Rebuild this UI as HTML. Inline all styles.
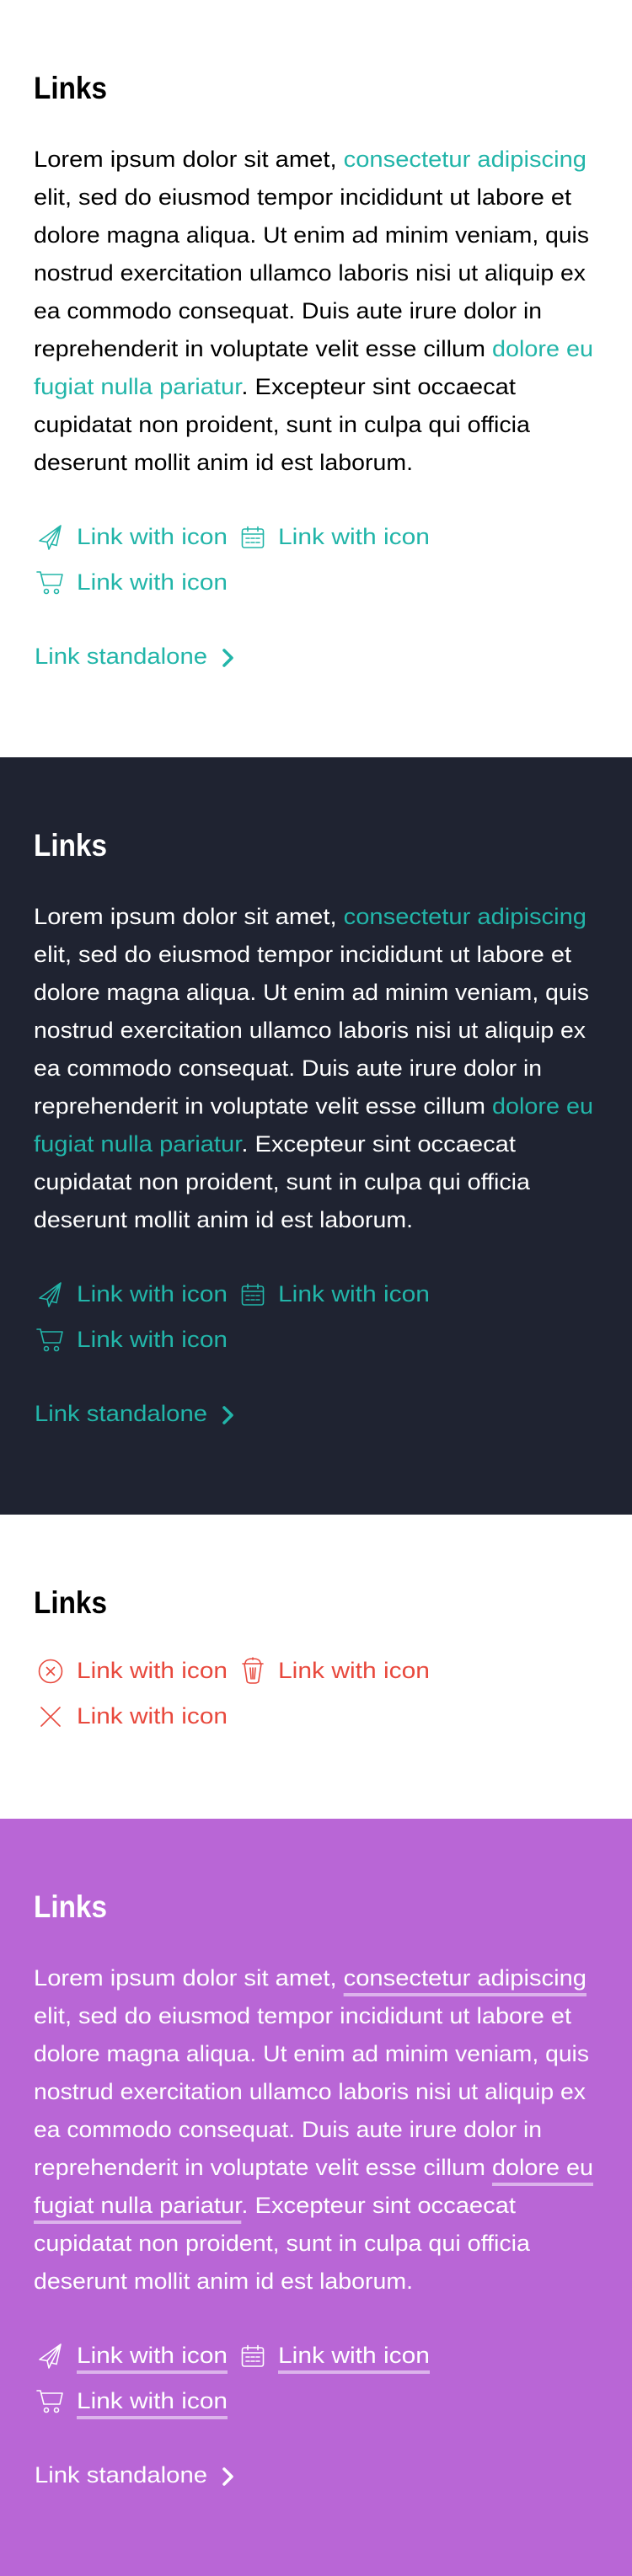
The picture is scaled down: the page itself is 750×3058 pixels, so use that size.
<!DOCTYPE html>
<html><head><meta charset="utf-8"><style>
*{margin:0;padding:0;box-sizing:border-box}
body{width:750px;height:3058px;position:relative;font-family:"Liberation Sans",sans-serif;overflow:hidden}
.sec{position:absolute;left:0;width:750px}
.ab{position:absolute;left:40px;white-space:nowrap;line-height:45px;height:45px}
.f{display:inline-block;transform-origin:0 50%;white-space:nowrap}
h2{position:absolute;left:40px;font-size:37px;font-weight:bold;line-height:50px;height:50px;transform:scaleX(.9);transform-origin:0 50%}
.t{font-size:27px}
.tl{color:#22b5a9}
.rd{color:#e8493d}
.u{text-decoration:underline;text-decoration-thickness:4px;text-underline-offset:9px;text-decoration-color:rgba(255,255,255,.5)}
svg{position:absolute;fill:none;stroke-width:1.6;stroke-linecap:round;stroke-linejoin:round}
.lk{position:absolute;font-size:27px;line-height:45px;height:45px;white-space:nowrap}
</style></head><body>

<!-- SECTION 1 -->
<div class="sec" style="top:0;height:899px;background:#fff;color:#000">
<h2 style="top:80px">Links</h2>
<div class="ab t" style="top:167px"><span class="f" style="--w:656">Lorem ipsum dolor sit amet, <span class="tl">consectetur adipiscing</span></span></div>
<div class="ab t" style="top:212px"><span class="f" style="--w:638">elit, sed do eiusmod tempor incididunt ut labore et</span></div>
<div class="ab t" style="top:257px"><span class="f" style="--w:659">dolore magna aliqua. Ut enim ad minim veniam, quis</span></div>
<div class="ab t" style="top:302px"><span class="f" style="--w:655">nostrud exercitation ullamco laboris nisi ut aliquip ex</span></div>
<div class="ab t" style="top:347px"><span class="f" style="--w:603">ea commodo consequat. Duis aute irure dolor in</span></div>
<div class="ab t" style="top:392px"><span class="f" style="--w:664">reprehenderit in voluptate velit esse cillum <span class="tl">dolore eu</span></span></div>
<div class="ab t" style="top:437px"><span class="f" style="--w:572"><span class="tl">fugiat nulla pariatur</span>. Excepteur sint occaecat</span></div>
<div class="ab t" style="top:482px"><span class="f" style="--w:589">cupidatat non proident, sunt in culpa qui officia</span></div>
<div class="ab t" style="top:527px"><span class="f" style="--w:450">deserunt mollit anim id est laborum.</span></div>
<svg style="left:45px;top:622px" width="30" height="32" viewBox="0 0 30 32" stroke="#22b5a9"><path d="M27 2L2 20l9 1.5zM27 2L11 21.5l2 8.5 3-6.5M27 2l-11 22 6 1.5z"/></svg>
<div class="lk tl" style="left:91px;top:615px"><span class="f" style="--w:179">Link with icon</span></div>
<svg style="left:286px;top:624px" width="28" height="28" viewBox="0 0 28 28" stroke="#22b5a9"><rect x="1.5" y="4" width="25" height="22" rx="2.5"/><path d="M1.5 10h25M8 1.5v5M20 1.5v5M6 15h4M12 15h4M18 15h4M6 20h4M12 20h4M18 20h4"/></svg>
<div class="lk tl" style="left:330px;top:615px"><span class="f" style="--w:180">Link with icon</span></div>
<svg style="left:43px;top:677px" width="34" height="30" viewBox="0 0 34 30" stroke="#22b5a9"><path d="M1 2h4l4 16h19l3-13H7"/><circle cx="12" cy="25" r="2.5"/><circle cx="24" cy="25" r="2.5"/></svg>
<div class="lk tl" style="left:91px;top:669px"><span class="f" style="--w:179">Link with icon</span></div>
<div class="lk tl" style="left:41px;top:757px"><span class="f" style="--w:205">Link standalone</span></div>
<svg style="left:263px;top:770px" width="16" height="22" viewBox="0 0 16 22" stroke="#22b5a9"><path d="M3 2l9 9-9 9" stroke-width="3.6"/></svg>
</div>

<!-- SECTION 2 DARK -->
<div class="sec" style="top:899px;height:899px;background:#1f2331;color:#fff">
<h2 style="top:80px">Links</h2>
<div class="ab t" style="top:167px"><span class="f" style="--w:656">Lorem ipsum dolor sit amet, <span class="tl">consectetur adipiscing</span></span></div>
<div class="ab t" style="top:212px"><span class="f" style="--w:638">elit, sed do eiusmod tempor incididunt ut labore et</span></div>
<div class="ab t" style="top:257px"><span class="f" style="--w:659">dolore magna aliqua. Ut enim ad minim veniam, quis</span></div>
<div class="ab t" style="top:302px"><span class="f" style="--w:655">nostrud exercitation ullamco laboris nisi ut aliquip ex</span></div>
<div class="ab t" style="top:347px"><span class="f" style="--w:603">ea commodo consequat. Duis aute irure dolor in</span></div>
<div class="ab t" style="top:392px"><span class="f" style="--w:664">reprehenderit in voluptate velit esse cillum <span class="tl">dolore eu</span></span></div>
<div class="ab t" style="top:437px"><span class="f" style="--w:572"><span class="tl">fugiat nulla pariatur</span>. Excepteur sint occaecat</span></div>
<div class="ab t" style="top:482px"><span class="f" style="--w:589">cupidatat non proident, sunt in culpa qui officia</span></div>
<div class="ab t" style="top:527px"><span class="f" style="--w:450">deserunt mollit anim id est laborum.</span></div>
<svg style="left:45px;top:622px" width="30" height="32" viewBox="0 0 30 32" stroke="#22b5a9"><path d="M27 2L2 20l9 1.5zM27 2L11 21.5l2 8.5 3-6.5M27 2l-11 22 6 1.5z"/></svg>
<div class="lk tl" style="left:91px;top:615px"><span class="f" style="--w:179">Link with icon</span></div>
<svg style="left:286px;top:624px" width="28" height="28" viewBox="0 0 28 28" stroke="#22b5a9"><rect x="1.5" y="4" width="25" height="22" rx="2.5"/><path d="M1.5 10h25M8 1.5v5M20 1.5v5M6 15h4M12 15h4M18 15h4M6 20h4M12 20h4M18 20h4"/></svg>
<div class="lk tl" style="left:330px;top:615px"><span class="f" style="--w:180">Link with icon</span></div>
<svg style="left:43px;top:677px" width="34" height="30" viewBox="0 0 34 30" stroke="#22b5a9"><path d="M1 2h4l4 16h19l3-13H7"/><circle cx="12" cy="25" r="2.5"/><circle cx="24" cy="25" r="2.5"/></svg>
<div class="lk tl" style="left:91px;top:669px"><span class="f" style="--w:179">Link with icon</span></div>
<div class="lk tl" style="left:41px;top:757px"><span class="f" style="--w:205">Link standalone</span></div>
<svg style="left:263px;top:770px" width="16" height="22" viewBox="0 0 16 22" stroke="#22b5a9"><path d="M3 2l9 9-9 9" stroke-width="3.6"/></svg>
</div>

<!-- SECTION 3 -->
<div class="sec" style="top:1798px;height:361px;background:#fff;color:#000">
<h2 style="top:80px">Links</h2>
<svg style="left:45px;top:171px" width="30" height="30" viewBox="0 0 30 30" stroke="#e8493d"><circle cx="15" cy="15" r="13.5"/><path d="M10.5 10.5l9 9M19.5 10.5l-9 9"/></svg>
<div class="lk rd" style="left:91px;top:163px"><span class="f" style="--w:179">Link with icon</span></div>
<svg style="left:286px;top:169px" width="28" height="32" viewBox="0 0 28 32" stroke="#e8493d"><path d="M2 8h24M5 8c0-5 4-6 9-6s9 1 9 6M14 1v2M4 8l3 20c0 2 2 3 4 3h6c2 0 4-1 4-3l3-20M11 13l1 13M14 13v13M17 13l-1 13"/></svg>
<div class="lk rd" style="left:330px;top:163px"><span class="f" style="--w:180">Link with icon</span></div>
<svg style="left:47px;top:227px" width="26" height="26" viewBox="0 0 26 26" stroke="#e8493d"><path d="M2 2l22 22M24 2L2 24"/></svg>
<div class="lk rd" style="left:91px;top:217px"><span class="f" style="--w:179">Link with icon</span></div>
</div>

<!-- SECTION 4 PURPLE -->
<div class="sec" style="top:2159px;height:899px;background:#b966d6;color:#fff">
<h2 style="top:80px">Links</h2>
<div class="ab t" style="top:167px"><span class="f" style="--w:656">Lorem ipsum dolor sit amet, <span class="u">consectetur adipiscing</span></span></div>
<div class="ab t" style="top:212px"><span class="f" style="--w:638">elit, sed do eiusmod tempor incididunt ut labore et</span></div>
<div class="ab t" style="top:257px"><span class="f" style="--w:659">dolore magna aliqua. Ut enim ad minim veniam, quis</span></div>
<div class="ab t" style="top:302px"><span class="f" style="--w:655">nostrud exercitation ullamco laboris nisi ut aliquip ex</span></div>
<div class="ab t" style="top:347px"><span class="f" style="--w:603">ea commodo consequat. Duis aute irure dolor in</span></div>
<div class="ab t" style="top:392px"><span class="f" style="--w:664">reprehenderit in voluptate velit esse cillum <span class="u">dolore eu</span></span></div>
<div class="ab t" style="top:437px"><span class="f" style="--w:572"><span class="u">fugiat nulla pariatur</span>. Excepteur sint occaecat</span></div>
<div class="ab t" style="top:482px"><span class="f" style="--w:589">cupidatat non proident, sunt in culpa qui officia</span></div>
<div class="ab t" style="top:527px"><span class="f" style="--w:450">deserunt mollit anim id est laborum.</span></div>
<svg style="left:45px;top:622px" width="30" height="32" viewBox="0 0 30 32" stroke="#fff"><path d="M27 2L2 20l9 1.5zM27 2L11 21.5l2 8.5 3-6.5M27 2l-11 22 6 1.5z"/></svg>
<div class="lk" style="left:91px;top:615px"><span class="f u" style="--w:179">Link with icon</span></div>
<svg style="left:286px;top:624px" width="28" height="28" viewBox="0 0 28 28" stroke="#fff"><rect x="1.5" y="4" width="25" height="22" rx="2.5"/><path d="M1.5 10h25M8 1.5v5M20 1.5v5M6 15h4M12 15h4M18 15h4M6 20h4M12 20h4M18 20h4"/></svg>
<div class="lk" style="left:330px;top:615px"><span class="f u" style="--w:180">Link with icon</span></div>
<svg style="left:43px;top:677px" width="34" height="30" viewBox="0 0 34 30" stroke="#fff"><path d="M1 2h4l4 16h19l3-13H7"/><circle cx="12" cy="25" r="2.5"/><circle cx="24" cy="25" r="2.5"/></svg>
<div class="lk" style="left:91px;top:669px"><span class="f u" style="--w:179">Link with icon</span></div>
<div class="lk" style="left:41px;top:757px"><span class="f" style="--w:205">Link standalone</span></div>
<svg style="left:263px;top:770px" width="16" height="22" viewBox="0 0 16 22" stroke="#fff"><path d="M3 2l9 9-9 9" stroke-width="3.6"/></svg>
</div>

<script>
document.querySelectorAll('.f').forEach(function(e){
  var w=parseFloat(e.style.getPropertyValue('--w'));
  var r=e.getBoundingClientRect().width;
  if(w&&r){e.style.transform='scaleX('+(w/r)+')';}
});
</script>
</body></html>
